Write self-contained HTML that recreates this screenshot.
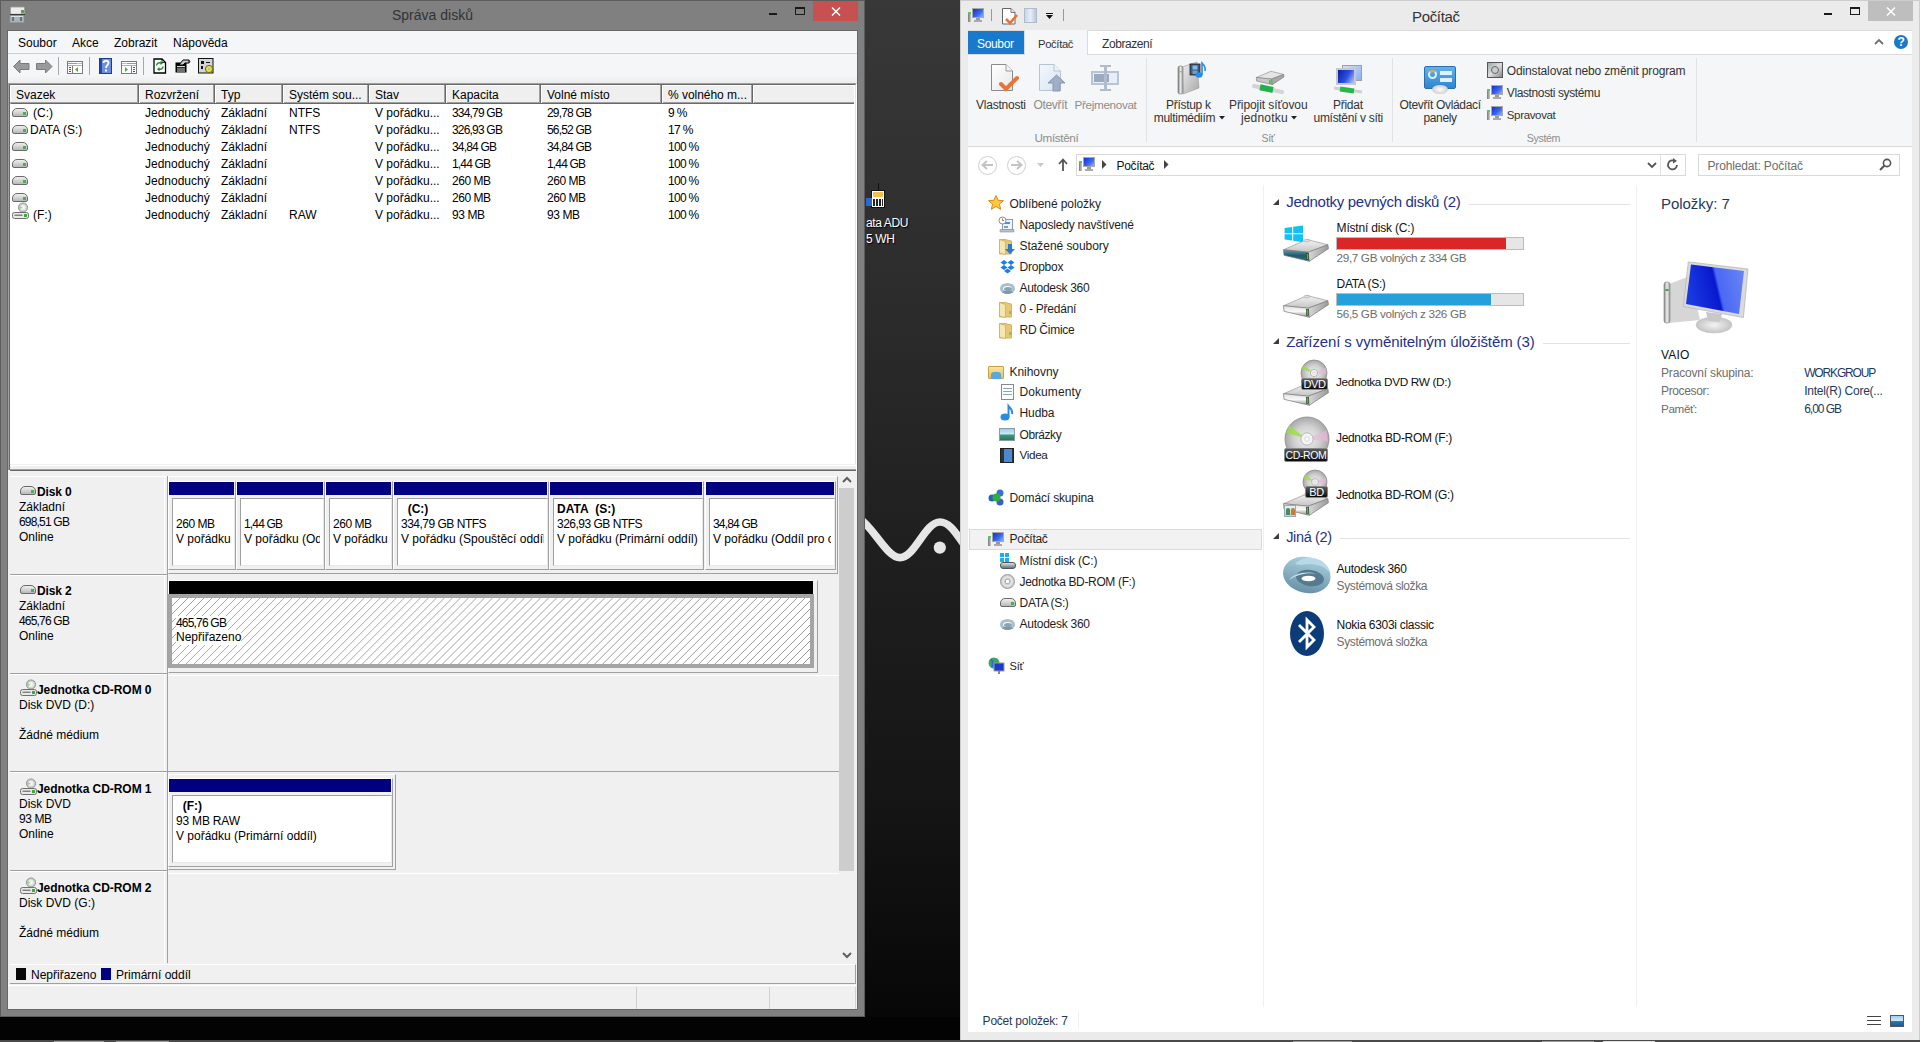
<!DOCTYPE html>
<html><head><meta charset="utf-8"><style>
*{box-sizing:border-box}
html,body{margin:0;padding:0}
body{width:1924px;height:1042px;overflow:hidden;position:relative;background:#050505;font-family:"Liberation Sans",sans-serif;font-size:12px;color:#000}
.a{position:absolute}
.t{position:absolute;white-space:nowrap;line-height:14px}
.b{font-weight:bold}
svg{position:absolute;overflow:visible}
</style></head><body>
<div class="a" style="left:865px;top:0px;width:95px;height:1017px;background:linear-gradient(#383838 0,#2c2c2c 300px,#1f1f1f 550px,#151515 800px,#070707 1017px)"></div>
<div class="a" style="left:0px;top:1017px;width:960px;height:23px;background:#030303"></div>
<div class="a" style="left:0px;top:1040px;width:1924px;height:2px;background:#4a4a4a"></div>
<div class="a" style="left:54px;top:1041px;width:50px;height:1px;background:#9a9a9a"></div>
<div class="a" style="left:116px;top:1041px;width:53px;height:1px;background:#9a9a9a"></div>
<div class="a" style="left:1293px;top:1041px;width:59px;height:1px;background:#9a9a9a"></div>
<div class="a" style="left:1542px;top:1041px;width:52px;height:1px;background:#9a9a9a"></div>
<div class="a" style="left:1603px;top:1041px;width:52px;height:1px;background:#e0e0e0"></div>
<div class="a" style="left:871px;top:190px;width:14px;height:18px;background:#fff;border:1.5px solid #111"></div>
<div class="a" style="left:873px;top:192px;width:10px;height:5px;background:#f0c050"></div>
<div class="a" style="left:873px;top:199px;width:10px;height:7px;background:repeating-linear-gradient(90deg,#222 0 2px,#fff 2px 3px)"></div>
<div class="a" style="left:866px;top:198px;width:6px;height:8px;background:#2a6ad0"></div>
<div class="a" style="left:878px;top:183px;width:1px;height:7px;background:#111"></div>
<div class="t" style="left:866px;top:216.0px;line-height:14px;color:#fff;text-shadow:1px 1px 1px #000;letter-spacing:-0.392px;">ata ADU</div>
<div class="t" style="left:866px;top:231.5px;line-height:14px;color:#fff;text-shadow:1px 1px 1px #000;letter-spacing:-0.333px;">5 WH</div>
<svg style="left:865px;top:505px" width="95" height="70" viewBox="0 0 95 70">
<path d="M-5 14 C 8 22, 22 52.6, 35 52.6 C 50 52.6, 60 17, 75 17 C 85 17, 92 30, 98 38" fill="none" stroke="#e6e6e6" stroke-width="7.7"/>
<circle cx="74.8" cy="42.6" r="6.1" fill="#e6e6e6"/></svg>
<div class="a" style="left:0px;top:0px;width:865px;height:1017px;background:#808080;border:1px solid #5c5c5c"></div>
<svg style="left:9px;top:6px" width="18" height="18" viewBox="0 0 18 18">
<rect x="1.5" y="1" width="14" height="7.5" rx="1" fill="#ececec" stroke="#9a9a9a" stroke-width=".8"/>
<rect x="12" y="4" width="3" height="3.5" fill="#6a9a3a"/>
<path d="M1 8.5 L16 8.5" stroke="#3a3a3a" stroke-width="1.2"/>
<rect x="1" y="9.5" width="14" height="7" fill="#a8b4bc" stroke="#8a949c" stroke-width=".6"/>
<path d="M4 11 L4 15 M12 11 L12 15" stroke="#3c4850" stroke-width="1.2"/>
<path d="M2 10.5 L14 10.5" stroke="#dde4e8" stroke-width="1"/>
</svg>
<div class="t" style="left:392px;top:6px;font-size:14px;line-height:18px;color:#333">Správa disků</div>
<div class="a" style="left:769px;top:13px;width:8px;height:2px;background:#1a1a1a"></div>
<div class="a" style="left:795px;top:7px;width:10px;height:8px;border:1px solid #1a1a1a;border-top-width:2px"></div>
<div class="a" style="left:813px;top:1px;width:45px;height:20px;background:#c75050"></div>
<svg style="left:831px;top:7px" width="10" height="9"><path d="M1 0.5 L9 8.5 M9 0.5 L1 8.5" stroke="#fff" stroke-width="1.5"/></svg>
<div class="a" style="left:7px;top:30px;width:851px;height:980px;background:#f0f0f0;border:1px solid #686868"></div>
<div class="a" style="left:8px;top:31px;width:849px;height:23px;background:#f5f6f7;border-bottom:1px solid #cfcfcf"></div>
<div class="t" style="left:18px;top:35.5px;line-height:14px;;">Soubor</div>
<div class="t" style="left:72px;top:35.5px;line-height:14px;;">Akce</div>
<div class="t" style="left:114px;top:35.5px;line-height:14px;;">Zobrazit</div>
<div class="t" style="left:173px;top:35.5px;line-height:14px;;">Nápověda</div>
<div class="a" style="left:8px;top:54px;width:849px;height:29px;background:linear-gradient(#f5f6f7 0,#f5f6f7 72%,#ececec 100%)"></div>
<svg style="left:13px;top:59px" width="17" height="15"><path d="M0.5 7.5 L7 1 L7 4.5 L16 4.5 L16 10.5 L7 10.5 L7 14 Z" fill="#9a9a9a" stroke="#7a7a7a"/></svg>
<svg style="left:36px;top:59px" width="17" height="15"><path d="M16 7.5 L9.5 1 L9.5 4.5 L0.5 4.5 L0.5 10.5 L9.5 10.5 L9.5 14 Z" fill="#9a9a9a" stroke="#7a7a7a"/></svg>
<div class="a" style="left:58px;top:57px;width:1px;height:18px;background:#a8a8a8"></div>
<div class="a" style="left:89px;top:57px;width:1px;height:18px;background:#a8a8a8"></div>
<div class="a" style="left:143px;top:57px;width:1px;height:18px;background:#a8a8a8"></div>
<svg style="left:67px;top:61px" width="16" height="13" viewBox="0 0 16 13"><g >
<rect x="0.5" y="0.5" width="15" height="12" fill="#fff" stroke="#7a7a7a"/>
<path d="M1 2.5 H10.5" stroke="#9a9a9a"/><rect x="11.5" y="2" width="1" height="1" fill="#777"/><rect x="13.5" y="2" width="1" height="1" fill="#777"/>
<path d="M1 4.5 H15" stroke="#b0b0b0"/>
<path d="M5.5 5 V12" stroke="#7a7a7a"/>
<rect x="2" y="6" width="2" height="1" fill="#555"/><rect x="2" y="8" width="2" height="1" fill="#555"/><rect x="2" y="10" width="2" height="1" fill="#555"/>
</g><path d="M8 8.5 L11 6 L11 11 Z" fill="#4caf3a"/></svg>
<svg style="left:99px;top:58px" width="13" height="16" viewBox="0 0 13 16"><rect x="0" y="0" width="13" height="16" fill="#6b8ee0"/><rect x="0" y="0" width="3" height="16" fill="#2a47a8"/><rect x="0.5" y="0.5" width="12" height="15" fill="none" stroke="#1f3a98"/>
<path d="M4.5 5 C 4.5 2, 9.5 2, 9.5 5 C 9.5 7, 7 7.5, 7 10" stroke="#fff" stroke-width="1.8" fill="none"/><rect x="6" y="11.5" width="2" height="2" fill="#fff"/></svg>
<svg style="left:121px;top:61px" width="16" height="13" viewBox="0 0 16 13"><g transform="translate(16,0) scale(-1,1)">
<rect x="0.5" y="0.5" width="15" height="12" fill="#fff" stroke="#7a7a7a"/>
<path d="M1 2.5 H10.5" stroke="#9a9a9a"/><rect x="11.5" y="2" width="1" height="1" fill="#777"/><rect x="13.5" y="2" width="1" height="1" fill="#777"/>
<path d="M1 4.5 H15" stroke="#b0b0b0"/>
<path d="M5.5 5 V12" stroke="#7a7a7a"/>
<rect x="2" y="6" width="2" height="1" fill="#555"/><rect x="2" y="8" width="2" height="1" fill="#555"/><rect x="2" y="10" width="2" height="1" fill="#555"/>
</g><path d="M7 8.5 L4 6 L4 11 Z" fill="#4caf3a"/></svg>
<svg style="left:153px;top:58px" width="14" height="16" viewBox="0 0 14 16">
<path d="M1 1 H9 L12.5 4.5 V15 H1 Z" fill="#fff" stroke="#000" stroke-width="1.3"/>
<path d="M9 1 V4.5 H12.5" fill="none" stroke="#000" stroke-width=".8"/>
<path d="M3.5 7.5 C 3.5 5, 6 4.5, 8 5" stroke="#1a8a2a" stroke-width="1.4" fill="none"/><path d="M7.5 3 L10 5.2 L7.5 7Z" fill="#1a8a2a"/>
<path d="M10 8.5 C 10 11, 8 11.5, 6 11.2" stroke="#1a8a2a" stroke-width="1.4" fill="none"/><path d="M6.5 9 L4 11.2 L6.5 13.2Z" fill="#1a8a2a"/>
</svg>
<svg style="left:175px;top:59px" width="16" height="14" viewBox="0 0 16 14">
<rect x="0.5" y="3.5" width="11" height="10" fill="#000"/>
<rect x="2" y="7" width="8" height="1.2" fill="#ddd"/><rect x="2" y="9.5" width="8" height="1" fill="#ddd"/><rect x="2" y="11.5" width="8" height="1" fill="#ddd"/>
<path d="M4 6 L8 1 H14 V4 H10 L8 6Z" fill="#c8c8c8" stroke="#000" stroke-width="1"/>
<path d="M14 0.5 L15.5 2.5 L14 4.5Z" fill="#2a2aa0"/>
</svg>
<svg style="left:198px;top:58px" width="17" height="16" viewBox="0 0 17 16">
<rect x="0.5" y="0.5" width="14.5" height="14.5" fill="#d4d4d4" stroke="#111" stroke-width="1"/>
<rect x="3" y="3" width="3" height="3" fill="#111"/><rect x="8" y="4" width="4" height="1" fill="#111"/><rect x="3" y="8" width="2" height="3" fill="#111"/>
<circle cx="11" cy="11" r="3.6" fill="#e8e040" stroke="#6a6a10" stroke-width="1"/><circle cx="11" cy="11" r="1.2" fill="#bbb"/>
</svg>
<div class="a" style="left:8px;top:83px;width:849px;height:387px;background:#fff;border-top:1px solid #a0a0a0;border-left:1px solid #a0a0a0;border-right:1px solid #fff"></div>
<div class="a" style="left:9px;top:84px;width:847px;height:386px;border-top:1px solid #696969;border-left:1px solid #696969;border-right:1px solid #e3e3e3"></div>
<div class="a" style="left:10px;top:85px;width:844px;height:19px;background:#efefef;border-top:1px solid #fff;border-left:1px solid #fff;border-bottom:1px solid #696969"></div>
<div class="a" style="left:10px;top:102px;width:844px;height:1px;background:#a0a0a0"></div>
<div class="t" style="left:16px;top:88.0px;line-height:14px;;">Svazek</div>
<div class="a" style="left:137px;top:85px;width:3px;height:18px;background:linear-gradient(90deg,#a0a0a0 33.3%,#696969 33.3%,#696969 66.6%,#fff 66.6%)"></div>
<div class="t" style="left:145px;top:88.0px;line-height:14px;;">Rozvržení</div>
<div class="a" style="left:213px;top:85px;width:3px;height:18px;background:linear-gradient(90deg,#a0a0a0 33.3%,#696969 33.3%,#696969 66.6%,#fff 66.6%)"></div>
<div class="t" style="left:221px;top:88.0px;line-height:14px;;">Typ</div>
<div class="a" style="left:281px;top:85px;width:3px;height:18px;background:linear-gradient(90deg,#a0a0a0 33.3%,#696969 33.3%,#696969 66.6%,#fff 66.6%)"></div>
<div class="t" style="left:289px;top:88.0px;line-height:14px;;">Systém sou...</div>
<div class="a" style="left:367px;top:85px;width:3px;height:18px;background:linear-gradient(90deg,#a0a0a0 33.3%,#696969 33.3%,#696969 66.6%,#fff 66.6%)"></div>
<div class="t" style="left:375px;top:88.0px;line-height:14px;;">Stav</div>
<div class="a" style="left:444px;top:85px;width:3px;height:18px;background:linear-gradient(90deg,#a0a0a0 33.3%,#696969 33.3%,#696969 66.6%,#fff 66.6%)"></div>
<div class="t" style="left:452px;top:88.0px;line-height:14px;;">Kapacita</div>
<div class="a" style="left:539px;top:85px;width:3px;height:18px;background:linear-gradient(90deg,#a0a0a0 33.3%,#696969 33.3%,#696969 66.6%,#fff 66.6%)"></div>
<div class="t" style="left:547px;top:88.0px;line-height:14px;;">Volné místo</div>
<div class="a" style="left:660px;top:85px;width:3px;height:18px;background:linear-gradient(90deg,#a0a0a0 33.3%,#696969 33.3%,#696969 66.6%,#fff 66.6%)"></div>
<div class="t" style="left:668px;top:88.0px;line-height:14px;;letter-spacing:-0.031px;">% volného m...</div>
<div class="a" style="left:751px;top:85px;width:3px;height:18px;background:linear-gradient(90deg,#a0a0a0 33.3%,#696969 33.3%,#696969 66.6%,#fff 66.6%)"></div>
<div class="a" style="left:12px;top:108px;width:16px;height:9px;border-radius:5px 5px 2px 2px;background:linear-gradient(#f0f0f0,#b8b8b8);border:1px solid #6a6a6a"></div>
<div class="a" style="left:23px;top:112px;width:3px;height:3px;background:#3db83d"></div>
<div class="t" style="left:33px;top:105.5px;line-height:14px;;">(C:)</div>
<div class="t" style="left:145px;top:105.5px;line-height:14px;;">Jednoduchý</div>
<div class="t" style="left:221px;top:105.5px;line-height:14px;;">Základní</div>
<div class="t" style="left:289px;top:105.5px;line-height:14px;;">NTFS</div>
<div class="t" style="left:375px;top:105.5px;line-height:14px;;">V pořádku...</div>
<div class="t" style="left:452px;top:105.5px;line-height:14px;;letter-spacing:-0.812px;">334,79 GB</div>
<div class="t" style="left:547px;top:105.5px;line-height:14px;;letter-spacing:-0.814px;">29,78 GB</div>
<div class="t" style="left:668px;top:105.5px;line-height:14px;;letter-spacing:-0.600px;">9 %</div>
<div class="a" style="left:12px;top:125px;width:16px;height:9px;border-radius:5px 5px 2px 2px;background:linear-gradient(#f0f0f0,#b8b8b8);border:1px solid #6a6a6a"></div>
<div class="a" style="left:23px;top:129px;width:3px;height:3px;background:#3db83d"></div>
<div class="t" style="left:30px;top:122.5px;line-height:14px;;">DATA (S:)</div>
<div class="t" style="left:145px;top:122.5px;line-height:14px;;">Jednoduchý</div>
<div class="t" style="left:221px;top:122.5px;line-height:14px;;">Základní</div>
<div class="t" style="left:289px;top:122.5px;line-height:14px;;">NTFS</div>
<div class="t" style="left:375px;top:122.5px;line-height:14px;;">V pořádku...</div>
<div class="t" style="left:452px;top:122.5px;line-height:14px;;letter-spacing:-0.812px;">326,93 GB</div>
<div class="t" style="left:547px;top:122.5px;line-height:14px;;letter-spacing:-0.814px;">56,52 GB</div>
<div class="t" style="left:668px;top:122.5px;line-height:14px;;letter-spacing:-0.667px;">17 %</div>
<div class="a" style="left:12px;top:142px;width:16px;height:9px;border-radius:5px 5px 2px 2px;background:linear-gradient(#f0f0f0,#b8b8b8);border:1px solid #6a6a6a"></div>
<div class="a" style="left:23px;top:146px;width:3px;height:3px;background:#3db83d"></div>
<div class="t" style="left:145px;top:139.5px;line-height:14px;;">Jednoduchý</div>
<div class="t" style="left:221px;top:139.5px;line-height:14px;;">Základní</div>
<div class="t" style="left:375px;top:139.5px;line-height:14px;;">V pořádku...</div>
<div class="t" style="left:452px;top:139.5px;line-height:14px;;letter-spacing:-0.814px;">34,84 GB</div>
<div class="t" style="left:547px;top:139.5px;line-height:14px;;letter-spacing:-0.814px;">34,84 GB</div>
<div class="t" style="left:668px;top:139.5px;line-height:14px;;letter-spacing:-0.700px;">100 %</div>
<div class="a" style="left:12px;top:159px;width:16px;height:9px;border-radius:5px 5px 2px 2px;background:linear-gradient(#f0f0f0,#b8b8b8);border:1px solid #6a6a6a"></div>
<div class="a" style="left:23px;top:163px;width:3px;height:3px;background:#3db83d"></div>
<div class="t" style="left:145px;top:156.5px;line-height:14px;;">Jednoduchý</div>
<div class="t" style="left:221px;top:156.5px;line-height:14px;;">Základní</div>
<div class="t" style="left:375px;top:156.5px;line-height:14px;;">V pořádku...</div>
<div class="t" style="left:452px;top:156.5px;line-height:14px;;letter-spacing:-0.817px;">1,44 GB</div>
<div class="t" style="left:547px;top:156.5px;line-height:14px;;letter-spacing:-0.817px;">1,44 GB</div>
<div class="t" style="left:668px;top:156.5px;line-height:14px;;letter-spacing:-0.700px;">100 %</div>
<div class="a" style="left:12px;top:176px;width:16px;height:9px;border-radius:5px 5px 2px 2px;background:linear-gradient(#f0f0f0,#b8b8b8);border:1px solid #6a6a6a"></div>
<div class="a" style="left:23px;top:180px;width:3px;height:3px;background:#3db83d"></div>
<div class="t" style="left:145px;top:173.5px;line-height:14px;;">Jednoduchý</div>
<div class="t" style="left:221px;top:173.5px;line-height:14px;;">Základní</div>
<div class="t" style="left:375px;top:173.5px;line-height:14px;;">V pořádku...</div>
<div class="t" style="left:452px;top:173.5px;line-height:14px;;letter-spacing:-0.480px;">260 MB</div>
<div class="t" style="left:547px;top:173.5px;line-height:14px;;letter-spacing:-0.480px;">260 MB</div>
<div class="t" style="left:668px;top:173.5px;line-height:14px;;letter-spacing:-0.700px;">100 %</div>
<div class="a" style="left:12px;top:193px;width:16px;height:9px;border-radius:5px 5px 2px 2px;background:linear-gradient(#f0f0f0,#b8b8b8);border:1px solid #6a6a6a"></div>
<div class="a" style="left:23px;top:197px;width:3px;height:3px;background:#3db83d"></div>
<div class="t" style="left:145px;top:190.5px;line-height:14px;;">Jednoduchý</div>
<div class="t" style="left:221px;top:190.5px;line-height:14px;;">Základní</div>
<div class="t" style="left:375px;top:190.5px;line-height:14px;;">V pořádku...</div>
<div class="t" style="left:452px;top:190.5px;line-height:14px;;letter-spacing:-0.480px;">260 MB</div>
<div class="t" style="left:547px;top:190.5px;line-height:14px;;letter-spacing:-0.480px;">260 MB</div>
<div class="t" style="left:668px;top:190.5px;line-height:14px;;letter-spacing:-0.700px;">100 %</div>
<svg style="left:12px;top:202px" width="17" height="18" viewBox="0 0 17 18">
<defs><radialGradient id="cdg"><stop offset="0" stop-color="#fff"/><stop offset=".5" stop-color="#e4ece4"/><stop offset="1" stop-color="#b8b8b8"/></radialGradient></defs>
<circle cx="11" cy="5.5" r="4.6" fill="url(#cdg)" stroke="#8a8a8a" stroke-width=".8"/>
<path d="M7 4 L11 5.5 L7.5 7Z" fill="#8cd070" opacity=".8"/>
<rect x="0.5" y="10.5" width="16" height="6" rx="2" fill="#e8e8e8" stroke="#707070"/>
<rect x="2.5" y="12.6" width="8" height="1.3" fill="#777"/>
<rect x="12" y="12" width="3" height="3" fill="#3aa83a"/>
</svg>
<div class="t" style="left:33px;top:207.5px;line-height:14px;;">(F:)</div>
<div class="t" style="left:145px;top:207.5px;line-height:14px;;">Jednoduchý</div>
<div class="t" style="left:221px;top:207.5px;line-height:14px;;">Základní</div>
<div class="t" style="left:289px;top:207.5px;line-height:14px;;">RAW</div>
<div class="t" style="left:375px;top:207.5px;line-height:14px;;">V pořádku...</div>
<div class="t" style="left:452px;top:207.5px;line-height:14px;;letter-spacing:-0.400px;">93 MB</div>
<div class="t" style="left:547px;top:207.5px;line-height:14px;;letter-spacing:-0.400px;">93 MB</div>
<div class="t" style="left:668px;top:207.5px;line-height:14px;;letter-spacing:-0.700px;">100 %</div>
<div class="a" style="left:10px;top:464px;width:846px;height:7px;background:#f0f0f0"></div>
<div class="a" style="left:10px;top:465px;width:846px;height:1px;background:#fff"></div>
<div class="a" style="left:10px;top:469px;width:846px;height:1px;background:#a0a0a0"></div>
<div class="a" style="left:10px;top:470px;width:846px;height:1px;background:#696969"></div>
<div class="a" style="left:10px;top:471px;width:829px;height:493px;background:#f0f0f0"></div>
<div class="a" style="left:839px;top:472px;width:16px;height:492px;background:#f0f0f0"></div>
<div class="a" style="left:839px;top:488px;width:15px;height:383px;background:#cdcdcd"></div>
<svg style="left:842px;top:476px" width="10" height="7"><path d="M1 6 L5 2 L9 6" stroke="#606060" stroke-width="2" fill="none"/></svg>
<svg style="left:842px;top:952px" width="10" height="7"><path d="M1 1 L5 5 L9 1" stroke="#606060" stroke-width="2" fill="none"/></svg>
<div class="a" style="left:10px;top:476px;width:157px;height:98px;background:#f0f0f0;border-top:1px solid #fff"></div>
<div class="a" style="left:164px;top:476px;width:1px;height:98px;background:#fff"></div>
<div class="a" style="left:167px;top:476px;width:1px;height:98px;background:#a0a0a0"></div>
<div class="a" style="left:10px;top:574px;width:158px;height:1px;background:#a0a0a0"></div>
<div class="a" style="left:10px;top:575px;width:158px;height:1px;background:#fff"></div>
<div class="a" style="left:20px;top:486px;width:16px;height:9px;border-radius:5px 5px 2px 2px;background:linear-gradient(#f0f0f0,#b8b8b8);border:1px solid #6a6a6a"></div>
<div class="a" style="left:31px;top:490px;width:3px;height:3px;background:#3db83d"></div>
<div class="t" style="left:37px;top:484.5px;line-height:14px;font-weight:bold;letter-spacing:-0.160px;">Disk 0</div>
<div class="t" style="left:19px;top:499.5px;line-height:14px;;">Základní</div>
<div class="t" style="left:19px;top:514.5px;line-height:14px;;letter-spacing:-0.812px;">698,51 GB</div>
<div class="t" style="left:19px;top:529.5px;line-height:14px;;">Online</div>
<div class="a" style="left:168px;top:476px;width:670px;height:98px;border-right:1px solid #a0a0a0;border-bottom:1px solid #a0a0a0;border-top:1px solid #fff;border-left:1px solid #fff"></div>
<div class="a" style="left:168px;top:481px;width:68px;height:89px;background:#f0f0f0;border-right:1px solid #a0a0a0;border-bottom:1px solid #a0a0a0;border-top:1px solid #fff;border-left:1px solid #fff"></div>
<div class="a" style="left:169px;top:482px;width:65px;height:13px;background:#000080"></div>
<div class="a" style="left:172px;top:498px;width:63px;height:68px;background:#fff;border-left:1px solid #a0a0a0;border-top:1px solid #a0a0a0;border-right:1px solid #e8e8e8;border-bottom:1px solid #e8e8e8"></div>
<div class="a" style="left:173px;top:499px;width:58px;height:66px;overflow:hidden"><div class="t" style="left:3px;top:18px;;letter-spacing:-0.480px;">260 MB</div><div class="t" style="left:3px;top:33px;;">V pořádku (Oddíl pro obnovení)</div></div>
<div class="a" style="left:236px;top:481px;width:89px;height:89px;background:#f0f0f0;border-right:1px solid #a0a0a0;border-bottom:1px solid #a0a0a0;border-top:1px solid #fff;border-left:1px solid #fff"></div>
<div class="a" style="left:237px;top:482px;width:86px;height:13px;background:#000080"></div>
<div class="a" style="left:240px;top:498px;width:84px;height:68px;background:#fff;border-left:1px solid #a0a0a0;border-top:1px solid #a0a0a0;border-right:1px solid #e8e8e8;border-bottom:1px solid #e8e8e8"></div>
<div class="a" style="left:241px;top:499px;width:79px;height:66px;overflow:hidden"><div class="t" style="left:3px;top:18px;;letter-spacing:-0.817px;">1,44 GB</div><div class="t" style="left:3px;top:33px;;">V pořádku (Oddíl pro obnovení)</div></div>
<div class="a" style="left:325px;top:481px;width:68px;height:89px;background:#f0f0f0;border-right:1px solid #a0a0a0;border-bottom:1px solid #a0a0a0;border-top:1px solid #fff;border-left:1px solid #fff"></div>
<div class="a" style="left:326px;top:482px;width:65px;height:13px;background:#000080"></div>
<div class="a" style="left:329px;top:498px;width:63px;height:68px;background:#fff;border-left:1px solid #a0a0a0;border-top:1px solid #a0a0a0;border-right:1px solid #e8e8e8;border-bottom:1px solid #e8e8e8"></div>
<div class="a" style="left:330px;top:499px;width:58px;height:66px;overflow:hidden"><div class="t" style="left:3px;top:18px;;letter-spacing:-0.480px;">260 MB</div><div class="t" style="left:3px;top:33px;;">V pořádku (Systémový oddíl EFI)</div></div>
<div class="a" style="left:393px;top:481px;width:156px;height:89px;background:#f0f0f0;border-right:1px solid #a0a0a0;border-bottom:1px solid #a0a0a0;border-top:1px solid #fff;border-left:1px solid #fff"></div>
<div class="a" style="left:394px;top:482px;width:153px;height:13px;background:#000080"></div>
<div class="a" style="left:397px;top:498px;width:151px;height:68px;background:#fff;border-left:1px solid #a0a0a0;border-top:1px solid #a0a0a0;border-right:1px solid #e8e8e8;border-bottom:1px solid #e8e8e8"></div>
<div class="a" style="left:398px;top:499px;width:146px;height:66px;overflow:hidden"><div class="t" style="left:3px;top:3px;font-weight:bold;">&nbsp;&nbsp;(C:)</div><div class="t" style="left:3px;top:18px;;letter-spacing:-0.500px;">334,79 GB NTFS</div><div class="t" style="left:3px;top:33px;;">V pořádku (Spouštěcí oddíl, Stránkovací soubor)</div></div>
<div class="a" style="left:549px;top:481px;width:155px;height:89px;background:#f0f0f0;border-right:1px solid #a0a0a0;border-bottom:1px solid #a0a0a0;border-top:1px solid #fff;border-left:1px solid #fff"></div>
<div class="a" style="left:550px;top:482px;width:152px;height:13px;background:#000080"></div>
<div class="a" style="left:553px;top:498px;width:150px;height:68px;background:#fff;border-left:1px solid #a0a0a0;border-top:1px solid #a0a0a0;border-right:1px solid #e8e8e8;border-bottom:1px solid #e8e8e8"></div>
<div class="a" style="left:554px;top:499px;width:145px;height:66px;overflow:hidden"><div class="t" style="left:3px;top:3px;font-weight:bold;">DATA&nbsp; (S:)</div><div class="t" style="left:3px;top:18px;;letter-spacing:-0.500px;">326,93 GB NTFS</div><div class="t" style="left:3px;top:33px;;">V pořádku (Primární oddíl)</div></div>
<div class="a" style="left:705px;top:481px;width:131px;height:89px;background:#f0f0f0;border-right:1px solid #a0a0a0;border-bottom:1px solid #a0a0a0;border-top:1px solid #fff;border-left:1px solid #fff"></div>
<div class="a" style="left:706px;top:482px;width:128px;height:13px;background:#000080"></div>
<div class="a" style="left:709px;top:498px;width:126px;height:68px;background:#fff;border-left:1px solid #a0a0a0;border-top:1px solid #a0a0a0;border-right:1px solid #e8e8e8;border-bottom:1px solid #e8e8e8"></div>
<div class="a" style="left:710px;top:499px;width:121px;height:66px;overflow:hidden"><div class="t" style="left:3px;top:18px;;letter-spacing:-0.814px;">34,84 GB</div><div class="t" style="left:3px;top:33px;;">V pořádku (Oddíl pro obnovení)</div></div>
<div class="a" style="left:10px;top:575px;width:157px;height:98px;background:#f0f0f0;border-top:1px solid #fff"></div>
<div class="a" style="left:164px;top:575px;width:1px;height:98px;background:#fff"></div>
<div class="a" style="left:167px;top:575px;width:1px;height:98px;background:#a0a0a0"></div>
<div class="a" style="left:10px;top:673px;width:158px;height:1px;background:#a0a0a0"></div>
<div class="a" style="left:10px;top:674px;width:158px;height:1px;background:#fff"></div>
<div class="a" style="left:20px;top:585px;width:16px;height:9px;border-radius:5px 5px 2px 2px;background:linear-gradient(#f0f0f0,#b8b8b8);border:1px solid #6a6a6a"></div>
<div class="a" style="left:31px;top:589px;width:3px;height:3px;background:#3db83d"></div>
<div class="t" style="left:37px;top:583.5px;line-height:14px;font-weight:bold;letter-spacing:-0.160px;">Disk 2</div>
<div class="t" style="left:19px;top:598.5px;line-height:14px;;">Základní</div>
<div class="t" style="left:19px;top:613.5px;line-height:14px;;letter-spacing:-0.812px;">465,76 GB</div>
<div class="t" style="left:19px;top:628.5px;line-height:14px;;">Online</div>
<div class="a" style="left:168px;top:580px;width:650px;height:93px;background:#f0f0f0;border-right:1px solid #a0a0a0;border-bottom:1px solid #a0a0a0;border-top:1px solid #fff;border-left:1px solid #fff"></div>
<div class="a" style="left:169px;top:581px;width:644px;height:13px;background:#000"></div>
<div class="a" style="left:168px;top:594px;width:646px;height:74px;border:4px solid #a4a4a4;background:repeating-linear-gradient(-45deg,#fff 0,#fff 4.7px,#858585 5.0px,#858585 5.3px,#fff 5.66px)"></div>
<div class="t" style="left:176px;top:615.5px;line-height:15px;background:#fff;letter-spacing:-0.812px;">465,76 GB</div>
<div class="t" style="left:176px;top:630.3px;line-height:15px;background:#fff;">Nepřiřazeno</div>
<div class="a" style="left:10px;top:674px;width:157px;height:97px;background:#f0f0f0;border-top:1px solid #fff"></div>
<div class="a" style="left:164px;top:674px;width:1px;height:97px;background:#fff"></div>
<div class="a" style="left:167px;top:674px;width:1px;height:97px;background:#a0a0a0"></div>
<div class="a" style="left:10px;top:771px;width:158px;height:1px;background:#a0a0a0"></div>
<div class="a" style="left:10px;top:772px;width:158px;height:1px;background:#fff"></div>
<svg style="left:20px;top:679px" width="17" height="18" viewBox="0 0 17 18">
<defs><radialGradient id="cdg"><stop offset="0" stop-color="#fff"/><stop offset=".5" stop-color="#e4ece4"/><stop offset="1" stop-color="#b8b8b8"/></radialGradient></defs>
<circle cx="11" cy="5.5" r="4.6" fill="url(#cdg)" stroke="#8a8a8a" stroke-width=".8"/>
<path d="M7 4 L11 5.5 L7.5 7Z" fill="#8cd070" opacity=".8"/>
<rect x="0.5" y="10.5" width="16" height="6" rx="2" fill="#e8e8e8" stroke="#707070"/>
<rect x="2.5" y="12.6" width="8" height="1.3" fill="#777"/>
<rect x="12" y="12" width="3" height="3" fill="#3aa83a"/>
</svg>
<div class="t" style="left:37px;top:682.5px;line-height:14px;font-weight:bold;letter-spacing:-0.050px;">Jednotka CD-ROM 0</div>
<div class="t" style="left:19px;top:697.5px;line-height:14px;;">Disk DVD (D:)</div>
<div class="t" style="left:19px;top:727.5px;line-height:14px;;">Žádné médium</div>
<div class="a" style="left:168px;top:675px;width:671px;height:97px;border-top:1px solid #fff;border-bottom:1px solid #a0a0a0"></div>
<div class="a" style="left:10px;top:772px;width:157px;height:98px;background:#f0f0f0;border-top:1px solid #fff"></div>
<div class="a" style="left:164px;top:772px;width:1px;height:98px;background:#fff"></div>
<div class="a" style="left:167px;top:772px;width:1px;height:98px;background:#a0a0a0"></div>
<div class="a" style="left:10px;top:870px;width:158px;height:1px;background:#a0a0a0"></div>
<div class="a" style="left:10px;top:871px;width:158px;height:1px;background:#fff"></div>
<svg style="left:20px;top:778px" width="17" height="18" viewBox="0 0 17 18">
<defs><radialGradient id="cdg"><stop offset="0" stop-color="#fff"/><stop offset=".5" stop-color="#e4ece4"/><stop offset="1" stop-color="#b8b8b8"/></radialGradient></defs>
<circle cx="11" cy="5.5" r="4.6" fill="url(#cdg)" stroke="#8a8a8a" stroke-width=".8"/>
<path d="M7 4 L11 5.5 L7.5 7Z" fill="#8cd070" opacity=".8"/>
<rect x="0.5" y="10.5" width="16" height="6" rx="2" fill="#e8e8e8" stroke="#707070"/>
<rect x="2.5" y="12.6" width="8" height="1.3" fill="#777"/>
<rect x="12" y="12" width="3" height="3" fill="#3aa83a"/>
</svg>
<div class="t" style="left:37px;top:781.5px;line-height:14px;font-weight:bold;letter-spacing:-0.050px;">Jednotka CD-ROM 1</div>
<div class="t" style="left:19px;top:796.5px;line-height:14px;;">Disk DVD</div>
<div class="t" style="left:19px;top:811.5px;line-height:14px;;letter-spacing:-0.400px;">93 MB</div>
<div class="t" style="left:19px;top:826.5px;line-height:14px;;">Online</div>
<div class="a" style="left:168px;top:774px;width:228px;height:96px;border-right:1px solid #a0a0a0;border-bottom:1px solid #a0a0a0;border-top:1px solid #fff;border-left:1px solid #fff"></div>
<div class="a" style="left:168px;top:778px;width:225px;height:89px;background:#f0f0f0;border-right:1px solid #a0a0a0;border-bottom:1px solid #a0a0a0;border-top:1px solid #fff;border-left:1px solid #fff"></div>
<div class="a" style="left:169px;top:779px;width:222px;height:13px;background:#000080"></div>
<div class="a" style="left:172px;top:795px;width:220px;height:68px;background:#fff;border-left:1px solid #a0a0a0;border-top:1px solid #a0a0a0;border-right:1px solid #e8e8e8;border-bottom:1px solid #e8e8e8"></div>
<div class="a" style="left:173px;top:796px;width:215px;height:66px;overflow:hidden"><div class="t" style="left:3px;top:3px;font-weight:bold;">&nbsp;&nbsp;(F:)</div><div class="t" style="left:3px;top:18px;;letter-spacing:-0.200px;">93 MB RAW</div><div class="t" style="left:3px;top:33px;;">V pořádku (Primární oddíl)</div></div>
<div class="a" style="left:10px;top:871px;width:157px;height:93px;background:#f0f0f0;border-top:1px solid #fff"></div>
<div class="a" style="left:164px;top:871px;width:1px;height:93px;background:#fff"></div>
<div class="a" style="left:167px;top:871px;width:1px;height:93px;background:#a0a0a0"></div>
<div class="a" style="left:10px;top:964px;width:158px;height:1px;background:#a0a0a0"></div>
<div class="a" style="left:10px;top:965px;width:158px;height:1px;background:#fff"></div>
<svg style="left:20px;top:877px" width="17" height="18" viewBox="0 0 17 18">
<defs><radialGradient id="cdg"><stop offset="0" stop-color="#fff"/><stop offset=".5" stop-color="#e4ece4"/><stop offset="1" stop-color="#b8b8b8"/></radialGradient></defs>
<circle cx="11" cy="5.5" r="4.6" fill="url(#cdg)" stroke="#8a8a8a" stroke-width=".8"/>
<path d="M7 4 L11 5.5 L7.5 7Z" fill="#8cd070" opacity=".8"/>
<rect x="0.5" y="10.5" width="16" height="6" rx="2" fill="#e8e8e8" stroke="#707070"/>
<rect x="2.5" y="12.6" width="8" height="1.3" fill="#777"/>
<rect x="12" y="12" width="3" height="3" fill="#3aa83a"/>
</svg>
<div class="t" style="left:37px;top:880.5px;line-height:14px;font-weight:bold;letter-spacing:-0.050px;">Jednotka CD-ROM 2</div>
<div class="t" style="left:19px;top:895.5px;line-height:14px;;">Disk DVD (G:)</div>
<div class="t" style="left:19px;top:925.5px;line-height:14px;;">Žádné médium</div>
<div class="a" style="left:168px;top:873px;width:671px;height:91px;border-top:1px solid #fff"></div>
<div class="a" style="left:10px;top:963px;width:829px;height:1px;background:#f0f0f0"></div>
<div class="a" style="left:10px;top:964px;width:846px;height:20px;background:#f0f0f0;border-top:1px solid #fff;border-bottom:1px solid #a0a0a0;border-right:1px solid #a0a0a0"></div>
<div class="a" style="left:16px;top:968px;width:10px;height:12px;background:#080808"></div>
<div class="t" style="left:31px;top:967.5px;line-height:14px;;">Nepřiřazeno</div>
<div class="a" style="left:101px;top:968px;width:10px;height:12px;background:#000080"></div>
<div class="t" style="left:116px;top:967.5px;line-height:14px;;">Primární oddíl</div>
<div class="a" style="left:8px;top:985px;width:849px;height:24px;background:#f0f0f0;border-top:1px solid #fff"></div>
<div class="a" style="left:636px;top:987px;width:1px;height:22px;background:#d0d0d0"></div>
<div class="a" style="left:769px;top:987px;width:1px;height:22px;background:#d0d0d0"></div>
<div class="a" style="left:855px;top:987px;width:1px;height:22px;background:#d0d0d0"></div>
<div class="a" style="left:1920px;top:0px;width:4px;height:1042px;background:#fff"></div>
<div class="a" style="left:960px;top:0px;width:960px;height:1040px;background:#ebebeb;border:1px solid #cdcdcd;border-bottom:none"></div>
<div class="t" style="left:1412px;top:7.5px;line-height:18px;font-size:15px;color:#333;letter-spacing:-0.337px;">Počítač</div>
<div class="a" style="left:1824px;top:13px;width:8px;height:2px;background:#1a1a1a"></div>
<div class="a" style="left:1850px;top:7px;width:10px;height:8px;border:1px solid #1a1a1a;border-top-width:2px"></div>
<div class="a" style="left:1868px;top:1px;width:45px;height:20px;background:#bebebe"></div>
<svg style="left:1886px;top:7px" width="10" height="9"><path d="M1 0.5 L9 8.5 M9 0.5 L1 8.5" stroke="#fff" stroke-width="1.5"/></svg>
<div class="a" style="left:972px;top:8px;width:12px;height:10px;background:linear-gradient(135deg,#1b2fd0,#3a6af0 60%,#9ab4f8);border:1px solid #a8a8a8"></div>
<div class="a" style="left:976px;top:18px;width:4px;height:2px;background:#999"></div>
<div class="a" style="left:974px;top:20px;width:8px;height:2px;background:#aaa"></div>
<div class="a" style="left:968px;top:12px;width:3px;height:10px;background:linear-gradient(90deg,#777,#ccc);border-top:2px solid #5c5"></div>
<div class="a" style="left:991px;top:9px;width:1px;height:12px;background:#9a9a9a"></div>
<svg style="left:1002px;top:8px" width="14" height="17" viewBox="0 0 14 17"><path d="M0.5 0.5 H9 L13 4.5 V16 H0.5Z" fill="#fff" stroke="#666"/><path d="M9 0.5 V4.5 H13" fill="#eee" stroke="#777"/></svg>
<svg style="left:1005px;top:14px" width="13" height="10"><path d="M1 5 L5 9 L12 1" stroke="#e8733a" stroke-width="2.6" fill="none"/></svg>
<div class="a" style="left:1024px;top:8px;width:13px;height:15px;background:linear-gradient(90deg,#c9d6e6,#e6eef8 50%,#b8c8dc);border:1px solid #b0bcc8"></div>
<div class="a" style="left:1046px;top:13px;width:7px;height:1px;background:#111"></div>
<svg style="left:1046px;top:15px" width="8" height="5"><path d="M0 0 L7 0 L3.5 4Z" fill="#111"/></svg>
<div class="a" style="left:1063px;top:9px;width:1px;height:12px;background:#9a9a9a"></div>
<div class="a" style="left:968px;top:30px;width:944px;height:1002px;background:#fff;border-top:1px solid #dadada"></div>
<div class="a" style="left:968px;top:31px;width:56px;height:23px;background:#1979ca"></div>
<div class="t" style="left:977px;top:36.5px;line-height:14px;color:#fff;letter-spacing:-0.339px;">Soubor</div>
<div class="a" style="left:1024px;top:30px;width:64px;height:26px;background:#f5f6f7;border-left:1px solid #dadada;border-right:1px solid #dadada"></div>
<div class="t" style="left:1038px;top:36.7px;line-height:14px;color:#333;font-size:11.27px;letter-spacing:-0.350px;">Počítač</div>
<div class="t" style="left:1102px;top:36.7px;line-height:14px;color:#333;letter-spacing:-0.429px;">Zobrazení</div>
<svg style="left:1874px;top:38px" width="10" height="7"><path d="M1 6 L5 2 L9 6" stroke="#707070" stroke-width="1.8" fill="none"/></svg>
<div class="a" style="left:1894px;top:35px;width:14px;height:14px;border-radius:50%;background:#1979ca"></div>
<div class="t" style="left:1897.5px;top:35px;font-size:12px;line-height:14px;color:#fff;font-weight:bold">?</div>
<div class="a" style="left:968px;top:54px;width:944px;height:93px;background:#f5f6f7;border-bottom:1px solid #dadada;border-top:1px solid #dadada"></div>
<div class="a" style="left:1025px;top:54px;width:62px;height:1px;background:#f5f6f7"></div>
<div class="a" style="left:1146px;top:58px;width:1px;height:84px;background:#e2e3e4"></div>
<div class="a" style="left:1392px;top:58px;width:1px;height:84px;background:#e2e3e4"></div>
<div class="a" style="left:1696px;top:58px;width:1px;height:84px;background:#e2e3e4"></div>
<svg style="left:991px;top:64px" width="23" height="28" viewBox="0 0 23 28"><defs><linearGradient id="docg" x1="0" y1="0" x2="1" y2="1"><stop offset="0" stop-color="#fff"/><stop offset="1" stop-color="#e8e8e8"/></linearGradient></defs>
<path d="M0.5 0.5 H15 L21.5 7 V26.5 H0.5Z" fill="url(#docg)" stroke="#8a8a8a"/><path d="M15 0.5 V7 H21.5" fill="#f4f4f4" stroke="#9a9a9a"/></svg>
<svg style="left:999px;top:76px" width="20" height="16"><path d="M2 8 L7 13 L18 2" stroke="#ea7438" stroke-width="4" fill="none" stroke-linecap="round"/></svg>
<div class="t" style="left:976px;top:97.5px;line-height:14px;color:#333;letter-spacing:-0.225px;">Vlastnosti</div>
<svg style="left:1039px;top:64px" width="23" height="28" viewBox="0 0 23 28"><defs><linearGradient id="docg2" x1="0" y1="0" x2="1" y2="1"><stop offset="0" stop-color="#f4f8fd"/><stop offset="1" stop-color="#d8e2ee"/></linearGradient></defs>
<path d="M0.5 0.5 H15 L21.5 7 V26.5 H0.5Z" fill="url(#docg2)" stroke="#b7c4d4"/><path d="M15 0.5 V7 H21.5" fill="#eef2f8" stroke="#b7c4d4"/></svg>
<svg style="left:1047px;top:74px" width="19" height="18"><path d="M9.5 1 L18 9 L13 9 L13 17 L6 17 L6 9 L1 9Z" fill="#9fb0c6" stroke="#8898b0"/></svg>
<div class="t" style="left:1033.5px;top:97.5px;line-height:14px;color:#8d8d8d;letter-spacing:-0.334px;">Otevřít</div>
<div class="a" style="left:1091px;top:71px;width:28px;height:14px;background:#e8eef6;border:2px solid #b8c4d4"></div>
<div class="a" style="left:1094px;top:74px;width:15px;height:8px;background:#9aaac0"></div>
<div class="a" style="left:1104px;top:65px;width:3px;height:26px;background:#b0bccc"></div>
<div class="a" style="left:1100px;top:65px;width:11px;height:2px;background:#b0bccc"></div>
<div class="a" style="left:1100px;top:89px;width:11px;height:2px;background:#b0bccc"></div>
<div class="t" style="left:1074.6px;top:97.5px;line-height:14px;color:#8d8d8d;font-size:11.72px;letter-spacing:-0.350px;">Přejmenovat</div>
<div class="t" style="left:1034.4px;top:130.5px;line-height:14px;color:#8d8d8d;font-size:11.71px;letter-spacing:-0.350px;">Umístění</div>
<svg style="left:1176px;top:60px" width="32" height="36" viewBox="1176 60 32 36">
<defs><linearGradient id="mside" x1="0" y1="0" x2="1" y2="1"><stop offset="0" stop-color="#f0f0f0"/><stop offset="1" stop-color="#a8a8a8"/></linearGradient>
<linearGradient id="mfront" x1="0" y1="0" x2="1" y2="0"><stop offset="0" stop-color="#777"/><stop offset=".5" stop-color="#e8e8e8"/><stop offset="1" stop-color="#999"/></linearGradient></defs>
<path d="M1182 67 L1197 62 L1199 88 L1183 94Z" fill="url(#mside)" stroke="#9a9a9a" stroke-width=".6"/>
<rect x="1178" y="66" width="5" height="28" rx="2" fill="url(#mfront)" stroke="#777" stroke-width=".6"/>
<rect x="1179" y="71" width="3" height="1.5" fill="#9c6"/>
<rect x="1190" y="64" width="10" height="11" fill="#3a5a80" stroke="#222" stroke-width=".8"/>
<rect x="1192.5" y="65.5" width="5" height="4" fill="#8ab8e0"/><rect x="1192.5" y="70.5" width="5" height="3.5" fill="#6aa0d0"/>
<ellipse cx="1199" cy="75" rx="3.5" ry="2.8" fill="#2a8ae8"/><path d="M1202 75 V63 C 1204 65, 1206 67, 1205 71" stroke="#2a8ae8" stroke-width="1.6" fill="none"/>
</svg>
<div class="t" style="left:1166px;top:97.5px;line-height:14px;color:#333;letter-spacing:-0.294px;">Přístup k</div>
<div class="t" style="left:1153.8px;top:110.5px;line-height:14px;color:#333;letter-spacing:-0.298px;">multimédiím</div>
<svg style="left:1219px;top:116px" width="7" height="4"><path d="M0 0 L6 0 L3 3.5Z" fill="#222"/></svg>
<svg style="left:1256px;top:70px" width="29" height="16" viewBox="0 0 47 25">
<path d="M0.5 11.7 L24.2 1.6 L44.9 6.7 L25.2 14.2Z" fill="#e4e4e4" stroke="#8a8a8a" stroke-width="1"/>
<path d="M0.5 11.7 L25.2 14.2 L26.3 23.3 L1 17.3Z" fill="#c8c8c8" stroke="#777" stroke-width="1"/>
<path d="M25.2 14.2 L44.9 6.7 L45.4 10.7 L26.3 23.3Z" fill="#a8a8a8" stroke="#777" stroke-width="1"/>
<rect x="21" y="16" width="3" height="6" fill="#3cc43c"/></svg>
<svg style="left:1252px;top:83px" width="34" height="12"><path d="M2 3 L30 9" stroke="#d4d4d4" stroke-width="4" stroke-linecap="round"/><path d="M8 4.3 L21 7" stroke="#22b04a" stroke-width="6"/></svg>
<div class="t" style="left:1229px;top:97.5px;line-height:14px;color:#333;letter-spacing:-0.085px;">Připojit síťovou</div>
<div class="t" style="left:1240.9px;top:110.5px;line-height:14px;color:#333;letter-spacing:0.190px;">jednotku</div>
<svg style="left:1291px;top:116px" width="7" height="4"><path d="M0 0 L6 0 L3 3.5Z" fill="#222"/></svg>
<div class="a" style="left:1342px;top:65px;width:20px;height:16px;background:linear-gradient(135deg,#cfe0ff,#8fb0f0);border:1px solid #a0a0a0"></div>
<div class="a" style="left:1336px;top:68px;width:20px;height:17px;background:linear-gradient(120deg,#0a1ea8,#2a50e0 55%,#b8c8f8);border:2px solid #c8c8c8"></div>
<svg style="left:1332px;top:85px" width="34" height="10"><path d="M2 3 L30 7" stroke="#d0d0d0" stroke-width="3"/><path d="M8 4 L22 6" stroke="#2bb54a" stroke-width="5"/></svg>
<div class="t" style="left:1333px;top:97.5px;line-height:14px;color:#333;letter-spacing:-0.270px;">Přidat</div>
<div class="t" style="left:1313.6px;top:110.5px;line-height:14px;color:#333;letter-spacing:-0.323px;">umístění v síti</div>
<div class="t" style="left:1261.6px;top:130.5px;line-height:14px;color:#8d8d8d;font-size:10.50px;letter-spacing:-0.429px;">Síť</div>
<div class="a" style="left:1424px;top:66px;width:32px;height:23px;border-radius:2px;background:linear-gradient(#5fb3ec,#2e86cf);border:1px solid #2a70b0"></div>
<div class="a" style="left:1428px;top:70px;width:9px;height:9px;border-radius:50%;border:2px solid #dff0ff;border-top-color:#f7a33a"></div>
<div class="a" style="left:1440px;top:71px;width:12px;height:4px;background:#dff0ff"></div>
<div class="a" style="left:1440px;top:78px;width:12px;height:4px;background:#dff0ff"></div>
<div class="a" style="left:1432px;top:85px;width:16px;height:9px;border-radius:50%;background:radial-gradient(#fff,#bdbdbd)"></div>
<div class="t" style="left:1399.5px;top:97.5px;line-height:14px;color:#333;letter-spacing:-0.346px;">Otevřít Ovládací</div>
<div class="t" style="left:1423.6px;top:110.5px;line-height:14px;color:#333;letter-spacing:-0.412px;">panely</div>
<div class="a" style="left:1487px;top:62px;width:16px;height:16px;background:linear-gradient(135deg,#9aa,#ddd 50%,#888);border:1px solid #555"></div>
<div class="a" style="left:1491px;top:66px;width:8px;height:8px;border-radius:50%;background:#ccc;border:1px solid #666"></div>
<div class="t" style="left:1506.8px;top:63.5px;line-height:14px;color:#333;letter-spacing:-0.149px;">Odinstalovat nebo změnit program</div>
<div class="a" style="left:1491px;top:85px;width:12px;height:10px;background:linear-gradient(135deg,#1b2fd0,#3a6af0 60%,#9ab4f8);border:1px solid #a8a8a8"></div>
<div class="a" style="left:1495px;top:95px;width:4px;height:2px;background:#999"></div>
<div class="a" style="left:1493px;top:97px;width:8px;height:2px;background:#aaa"></div>
<div class="a" style="left:1487px;top:89px;width:3px;height:10px;background:linear-gradient(90deg,#777,#ccc);border-top:2px solid #5c5"></div>
<div class="t" style="left:1506.8px;top:85.5px;line-height:14px;color:#333;letter-spacing:-0.379px;">Vlastnosti systému</div>
<div class="a" style="left:1491px;top:106px;width:12px;height:10px;background:linear-gradient(135deg,#1b2fd0,#3a6af0 60%,#9ab4f8);border:1px solid #a8a8a8"></div>
<div class="a" style="left:1495px;top:116px;width:4px;height:2px;background:#999"></div>
<div class="a" style="left:1493px;top:118px;width:8px;height:2px;background:#aaa"></div>
<div class="a" style="left:1487px;top:110px;width:3px;height:10px;background:linear-gradient(90deg,#777,#ccc);border-top:2px solid #5c5"></div>
<div class="t" style="left:1506.8px;top:107.5px;line-height:14px;color:#333;font-size:11.50px;letter-spacing:-0.350px;">Spravovat</div>
<div class="t" style="left:1526.7px;top:130.5px;line-height:14px;color:#8d8d8d;font-size:10.66px;letter-spacing:-0.350px;">Systém</div>
<div class="a" style="left:978.0px;top:155.5px;width:19px;height:19px;border-radius:50%;border:1px solid #cfcfcf"></div>
<div class="a" style="left:1006.5px;top:155.5px;width:19px;height:19px;border-radius:50%;border:1px solid #cfcfcf"></div>
<svg style="left:981px;top:160px" width="13" height="10"><path d="M6 1 L1.5 5 L6 9 M1.5 5 L12 5" stroke="#c4c4c4" stroke-width="2" fill="none"/></svg>
<svg style="left:1010px;top:160px" width="13" height="10"><path d="M7 1 L11.5 5 L7 9 M11.5 5 L1 5" stroke="#c4c4c4" stroke-width="2" fill="none"/></svg>
<svg style="left:1037px;top:163px" width="8" height="5"><path d="M0 0 L7 0 L3.5 4Z" fill="#c8c8c8"/></svg>
<svg style="left:1058px;top:158px" width="10" height="14"><path d="M5 13 L5 2 M1 6 L5 1.5 L9 6" stroke="#555" stroke-width="1.8" fill="none"/></svg>
<div class="a" style="left:1076px;top:154px;width:610px;height:22px;background:#fff;border:1px solid #d9d9d9"></div>
<div class="a" style="left:1083px;top:157px;width:12px;height:10px;background:linear-gradient(135deg,#1b2fd0,#3a6af0 60%,#9ab4f8);border:1px solid #a8a8a8"></div>
<div class="a" style="left:1087px;top:167px;width:4px;height:2px;background:#999"></div>
<div class="a" style="left:1085px;top:169px;width:8px;height:2px;background:#aaa"></div>
<div class="a" style="left:1079px;top:161px;width:3px;height:10px;background:linear-gradient(90deg,#777,#ccc);border-top:2px solid #5c5"></div>
<svg style="left:1102px;top:160px" width="5" height="9"><path d="M0 0 L4.5 4.5 L0 9Z" fill="#444"/></svg>
<div class="t" style="left:1116.5px;top:158.5px;line-height:14px;color:#111;letter-spacing:-0.337px;">Počítač</div>
<svg style="left:1164px;top:160px" width="5" height="9"><path d="M0 0 L4.5 4.5 L0 9Z" fill="#444"/></svg>
<svg style="left:1647px;top:162px" width="10" height="7"><path d="M1 1 L5 5 L9 1" stroke="#555" stroke-width="1.8" fill="none"/></svg>
<div class="a" style="left:1660px;top:155px;width:1px;height:20px;background:#e0e0e0"></div>
<svg style="left:1666px;top:158px" width="14" height="14"><path d="M11 7 A4.5 4.5 0 1 1 8.5 2.8" stroke="#555" stroke-width="1.8" fill="none"/><path d="M7 0 L11 3 L7 5.5Z" fill="#555"/></svg>
<div class="a" style="left:1698px;top:154px;width:202px;height:22px;background:#fff;border:1px solid #d9d9d9"></div>
<div class="t" style="left:1707.5px;top:158.5px;line-height:14px;color:#6d6d6d;letter-spacing:-0.156px;">Prohledat: Počítač</div>
<svg style="left:1879px;top:158px" width="13" height="13"><circle cx="8" cy="5" r="3.6" stroke="#555" stroke-width="1.6" fill="none"/><path d="M5.5 7.5 L1 12" stroke="#555" stroke-width="2"/></svg>
<div class="a" style="left:1263px;top:185px;width:1px;height:822px;background:#f0f0f0"></div>
<div class="a" style="left:1636px;top:185px;width:1px;height:822px;background:#f0f0f0"></div>
<svg style="left:988px;top:195px" width="16" height="15"><path d="M8 0.5 L10.2 5.3 L15.5 5.7 L11.4 9.1 L12.7 14.3 L8 11.5 L3.3 14.3 L4.6 9.1 L0.5 5.7 L5.8 5.3Z" fill="#fbc940" stroke="#e08a1a"/></svg>
<div class="t" style="left:1009.5px;top:197.1px;line-height:14px;color:#1e1e1e;letter-spacing:-0.088px;">Oblíbené položky</div>
<svg style="left:998px;top:216px" width="17" height="17" viewBox="0 0 17 17">
<rect x="4.5" y="3.5" width="10" height="10" fill="#eef4fa" stroke="#8a9aa8"/>
<rect x="7" y="6" width="5" height="2" fill="#5a8ad0"/><rect x="6" y="10" width="4" height="2" fill="#7aa0c8"/>
<path d="M2 13.5 H16 V16 H2Z" fill="#b8c0c8" stroke="#8a949c" stroke-width=".6"/>
<circle cx="4.5" cy="4.5" r="3.5" fill="#fff" stroke="#8a8a8a"/><path d="M4.5 2.5 V4.5 H6" stroke="#555" stroke-width=".8" fill="none"/>
</svg>
<div class="t" style="left:1019.5px;top:217.6px;line-height:14px;color:#1e1e1e;letter-spacing:-0.193px;">Naposledy navštívené</div>
<svg style="left:999px;top:238px" width="14" height="17" viewBox="0 0 14 17">
<path d="M0.5 1.5 H6 L12.5 3 V16 H0.5Z" fill="#e4c878" stroke="#c8a848" stroke-width=".8"/>
<path d="M0.5 1.5 L6.5 3.5 V16.5 L0.5 15Z" fill="#f6e6b0" stroke="#d0b060" stroke-width=".8"/>
<path d="M11 10 V13" stroke="#6a9a4a" stroke-width="1"/>
</svg>
<svg style="left:1005px;top:244px" width="10" height="11"><path d="M3 0 L7 0 L7 5 L10 5 L5 10 L0 5 L3 5Z" fill="#2a7ad0"/></svg>
<div class="t" style="left:1019.5px;top:238.6px;line-height:14px;color:#1e1e1e;letter-spacing:-0.061px;">Stažené soubory</div>
<svg style="left:1000px;top:259px" width="15" height="15"><path d="M4 1 L0.5 3.5 L4 6 L7.5 3.5Z M11 1 L7.5 3.5 L11 6 L14.5 3.5Z M4 6 L0.5 8.5 L4 11 L7.5 8.5Z M11 6 L7.5 8.5 L11 11 L14.5 8.5Z M7.5 9.5 L4 12 L7.5 14.5 L11 12Z" fill="#1f7fe0"/></svg>
<div class="t" style="left:1019.5px;top:259.6px;line-height:14px;color:#1e1e1e;letter-spacing:-0.226px;">Dropbox</div>
<div class="a" style="left:1000px;top:283px;width:15px;height:11px;border-radius:50%;border:3px solid #a8bfcc;border-bottom-color:#7d98a8"></div>
<div class="a" style="left:1004px;top:287px;width:8px;height:4px;border-radius:50%;background:#8aa4b4"></div>
<div class="t" style="left:1019.5px;top:280.6px;line-height:14px;color:#1e1e1e;letter-spacing:-0.299px;">Autodesk 360</div>
<svg style="left:999px;top:301px" width="14" height="17" viewBox="0 0 14 17">
<path d="M0.5 1.5 H6 L12.5 3 V16 H0.5Z" fill="#e4c878" stroke="#c8a848" stroke-width=".8"/>
<path d="M0.5 1.5 L6.5 3.5 V16.5 L0.5 15Z" fill="#f6e6b0" stroke="#d0b060" stroke-width=".8"/>
<path d="M11 10 V13" stroke="#6a9a4a" stroke-width="1"/>
</svg>
<div class="t" style="left:1019.5px;top:301.6px;line-height:14px;color:#1e1e1e;letter-spacing:-0.247px;">0 - Předání</div>
<svg style="left:999px;top:322px" width="14" height="17" viewBox="0 0 14 17">
<path d="M0.5 1.5 H6 L12.5 3 V16 H0.5Z" fill="#e4c878" stroke="#c8a848" stroke-width=".8"/>
<path d="M0.5 1.5 L6.5 3.5 V16.5 L0.5 15Z" fill="#f6e6b0" stroke="#d0b060" stroke-width=".8"/>
<path d="M11 10 V13" stroke="#6a9a4a" stroke-width="1"/>
</svg>
<div class="t" style="left:1019.5px;top:322.6px;line-height:14px;color:#1e1e1e;letter-spacing:-0.267px;">RD Čimice</div>
<div class="a" style="left:988px;top:366px;width:16px;height:13px;background:linear-gradient(#f8e4a0,#e8c060);border:1px solid #c8a040;border-radius:1px"></div>
<div class="a" style="left:991px;top:372px;width:10px;height:7px;background:#5aa8e0;border-radius:3px 3px 0 0"></div>
<div class="t" style="left:1009.5px;top:364.6px;line-height:14px;color:#1e1e1e;letter-spacing:-0.038px;">Knihovny</div>
<div class="a" style="left:1001px;top:384px;width:13px;height:16px;background:#fff;border:1px solid #8a8a8a"></div>
<div class="a" style="left:1003px;top:388px;width:9px;height:1px;background:#8aa"></div>
<div class="a" style="left:1003px;top:391px;width:9px;height:1px;background:#8aa"></div>
<div class="a" style="left:1003px;top:394px;width:9px;height:1px;background:#8aa"></div>
<div class="t" style="left:1019.5px;top:385.2px;line-height:14px;color:#1e1e1e;letter-spacing:0.089px;">Dokumenty</div>
<svg style="left:1000px;top:405px" width="14" height="16"><ellipse cx="5" cy="12" rx="4.5" ry="3.5" fill="#2a8ae0"/><path d="M8.5 12 L8.5 1 C 10 3, 13 5, 12 9" stroke="#2a8ae0" stroke-width="2" fill="none"/></svg>
<div class="t" style="left:1019.5px;top:406.0px;line-height:14px;color:#1e1e1e;letter-spacing:-0.090px;">Hudba</div>
<div class="a" style="left:999px;top:428px;width:16px;height:13px;background:linear-gradient(#9ad0f0 0,#cde8f6 45%,#3a9a7a 55%,#2a7a5a);border:1px solid #8a9aa8"></div>
<div class="t" style="left:1019.5px;top:427.5px;line-height:14px;color:#1e1e1e;letter-spacing:-0.413px;">Obrázky</div>
<div class="a" style="left:1000px;top:448px;width:14px;height:15px;background:linear-gradient(90deg,#333 0 3px,#4a8ad0 3px 11px,#333 11px);border:1px solid #222"></div>
<div class="t" style="left:1019.5px;top:448.2px;line-height:14px;color:#1e1e1e;font-size:11.73px;letter-spacing:-0.350px;">Videa</div>
<svg style="left:988px;top:489px" width="17" height="17"><circle cx="4" cy="9" r="3.5" fill="#2a60c0"/><circle cx="12" cy="4" r="3.5" fill="#3a70d0"/><circle cx="12" cy="13" r="3.5" fill="#3a60c8"/><circle cx="8.5" cy="8.5" r="4" fill="#2fae3f"/></svg>
<div class="t" style="left:1009.5px;top:490.6px;line-height:14px;color:#1e1e1e;letter-spacing:-0.149px;">Domácí skupina</div>
<div class="a" style="left:969px;top:529px;width:293px;height:21px;background:#f2f2f2;border:1px solid #dadada"></div>
<div class="a" style="left:992px;top:532px;width:12px;height:10px;background:linear-gradient(135deg,#1b2fd0,#3a6af0 60%,#9ab4f8);border:1px solid #a8a8a8"></div>
<div class="a" style="left:996px;top:542px;width:4px;height:2px;background:#999"></div>
<div class="a" style="left:994px;top:544px;width:8px;height:2px;background:#aaa"></div>
<div class="a" style="left:988px;top:536px;width:3px;height:10px;background:linear-gradient(90deg,#777,#ccc);border-top:2px solid #5c5"></div>
<div class="t" style="left:1009.6px;top:532.1px;line-height:14px;color:#1e1e1e;letter-spacing:-0.303px;">Počítač</div>
<div class="a" style="left:1000px;top:553px;width:4px;height:4px;background:#1ab0e8"></div><div class="a" style="left:1005px;top:553px;width:4px;height:4px;background:#1ab0e8"></div><div class="a" style="left:1000px;top:558px;width:4px;height:4px;background:#1ab0e8"></div><div class="a" style="left:1005px;top:558px;width:4px;height:4px;background:#1ab0e8"></div>
<div class="a" style="left:1000px;top:562px;width:16px;height:7px;border-radius:3px;background:linear-gradient(#e0e0e0,#5a7a8a);border:1px solid #555"></div>
<div class="t" style="left:1019.6px;top:553.6px;line-height:14px;color:#1e1e1e;letter-spacing:-0.191px;">Místní disk (C:)</div>
<div class="a" style="left:1000px;top:574px;width:15px;height:15px;border-radius:50%;background:radial-gradient(#fff 0 15%,#aaa 20%,#e8e8e8 45%,#b0b0b0 90%);border:1px solid #999"></div>
<div class="t" style="left:1019.6px;top:574.6px;line-height:14px;color:#1e1e1e;letter-spacing:-0.352px;">Jednotka BD-ROM (F:)</div>
<div class="a" style="left:1000px;top:598px;width:16px;height:9px;border-radius:5px 5px 2px 2px;background:linear-gradient(#f0f0f0,#b8b8b8);border:1px solid #6a6a6a"></div>
<div class="a" style="left:1011px;top:602px;width:3px;height:3px;background:#3db83d"></div>
<div class="t" style="left:1019.6px;top:595.6px;line-height:14px;color:#1e1e1e;letter-spacing:-0.373px;">DATA (S:)</div>
<div class="a" style="left:1000px;top:619px;width:15px;height:11px;border-radius:50%;border:3px solid #a8bfcc;border-bottom-color:#7d98a8"></div>
<div class="a" style="left:1004px;top:623px;width:8px;height:4px;border-radius:50%;background:#8aa4b4"></div>
<div class="t" style="left:1019.6px;top:616.6px;line-height:14px;color:#1e1e1e;letter-spacing:-0.272px;">Autodesk 360</div>
<svg style="left:988px;top:657px" width="17" height="17"><circle cx="6" cy="6" r="5.5" fill="#3aa860"/><path d="M3 2 Q6 6 4 10" stroke="#2a70d0" stroke-width="2" fill="none"/><rect x="6" y="6" width="10" height="8" fill="#1a3ad0" stroke="#999"/><rect x="10" y="14" width="2" height="3" fill="#888"/></svg>
<div class="t" style="left:1009.6px;top:658.6px;line-height:14px;color:#1e1e1e;font-size:11.14px;letter-spacing:-0.350px;">Síť</div>
<svg style="left:1273px;top:198.5px" width="7" height="7"><path d="M6 0 L6 6 L0 6Z" fill="#3c3c3c"/></svg>
<div class="t" style="left:1286.2px;top:193.1px;line-height:18px;font-size:15px;color:#1e3287;letter-spacing:-0.286px;">Jednotky pevných disků (2)</div>
<div class="a" style="left:1469px;top:203.5px;width:161px;height:1px;background:#e2e2e2"></div>
<svg style="left:1273px;top:338px" width="7" height="7"><path d="M6 0 L6 6 L0 6Z" fill="#3c3c3c"/></svg>
<div class="t" style="left:1286.2px;top:332.6px;line-height:18px;font-size:15px;color:#1e3287;letter-spacing:-0.113px;">Zařízení s vyměnitelným úložištěm (3)</div>
<div class="a" style="left:1543px;top:343px;width:87px;height:1px;background:#e2e2e2"></div>
<svg style="left:1273px;top:533px" width="7" height="7"><path d="M6 0 L6 6 L0 6Z" fill="#3c3c3c"/></svg>
<div class="t" style="left:1286.2px;top:527.6px;line-height:18px;font-size:15px;color:#1e3287;font-size:14.47px;letter-spacing:-0.350px;">Jiná (2)</div>
<div class="a" style="left:1340px;top:538px;width:290px;height:1px;background:#e2e2e2"></div>
<svg style="left:1284px;top:225px" width="20" height="18"><path d="M0.6 3 L8.2 1.9 L8.2 8.3 L0.6 8.3Z M9.2 1.7 L19 0.5 L19 8.3 L9.2 8.3Z M0.6 9.3 L8.2 9.3 L8.2 15.6 L0.6 14.6Z M9.2 9.3 L19 9.3 L19 17.2 L9.2 15.8Z" fill="#12c0f2"/></svg>
<svg style="left:1283px;top:238px" width="47" height="25" viewBox="0 0 47 25">
<defs><linearGradient id="gtop" x1="0" y1="0" x2="0" y2="1"><stop offset="0" stop-color="#f4f4f4"/><stop offset="1" stop-color="#c4c4c4"/></linearGradient>
<linearGradient id="gfront" x1="0" y1="0" x2="0" y2="1"><stop offset="0" stop-color="#e0e0e0"/><stop offset=".5" stop-color="#f8f8f8"/><stop offset="1" stop-color="#8a8a8a"/></linearGradient>
<linearGradient id="gteal" x1="0" y1="0" x2="0" y2="1"><stop offset="0" stop-color="#6a9aae"/><stop offset=".5" stop-color="#1e5a70"/><stop offset="1" stop-color="#3a6a7a"/></linearGradient>
<linearGradient id="gside" x1="0" y1="0" x2="1" y2="0"><stop offset="0" stop-color="#d8d8d8"/><stop offset="1" stop-color="#9a9a9a"/></linearGradient></defs>
<path d="M0.5 11.7 L24.2 1.6 L44.9 6.7 L25.2 14.2Z" fill="url(#gtop)" stroke="#9a9a9a" stroke-width=".7"/>
<path d="M0.5 11.7 L25.2 14.2 L26.3 23.3 L1 17.3Z" fill="url(#gteal)" stroke="#777" stroke-width=".7"/>
<path d="M25.2 14.2 L44.9 6.7 L45.4 10.7 L26.3 23.3Z" fill="url(#gside)" stroke="#777" stroke-width=".7"/>
<ellipse cx="24" cy="2.6" rx="3" ry="1.4" fill="#ddd" stroke="#999" stroke-width=".5"/>
<rect x="23.3" y="15.5" width="2.2" height="6" fill="#3cc43c" stroke="#222" stroke-width=".5"/>
</svg>
<div class="t" style="left:1336.6px;top:220.8px;line-height:14px;color:#111;letter-spacing:-0.185px;">Místní disk (C:)</div>
<div class="a" style="left:1336px;top:237px;width:188px;height:13px;background:#e6e6e6;border:1px solid #bcbcbc"></div>
<div class="a" style="left:1337px;top:238px;width:169px;height:11px;background:#da2626"></div>
<div class="t" style="left:1336.6px;top:251.4px;line-height:14px;color:#6d6d6d;font-size:11.71px;letter-spacing:-0.350px;">29,7 GB volných z 334 GB</div>
<svg style="left:1283px;top:294px" width="47" height="25" viewBox="0 0 47 25">
<defs><linearGradient id="gtop" x1="0" y1="0" x2="0" y2="1"><stop offset="0" stop-color="#f4f4f4"/><stop offset="1" stop-color="#c4c4c4"/></linearGradient>
<linearGradient id="gfront" x1="0" y1="0" x2="0" y2="1"><stop offset="0" stop-color="#e0e0e0"/><stop offset=".5" stop-color="#f8f8f8"/><stop offset="1" stop-color="#8a8a8a"/></linearGradient>
<linearGradient id="gteal" x1="0" y1="0" x2="0" y2="1"><stop offset="0" stop-color="#6a9aae"/><stop offset=".5" stop-color="#1e5a70"/><stop offset="1" stop-color="#3a6a7a"/></linearGradient>
<linearGradient id="gside" x1="0" y1="0" x2="1" y2="0"><stop offset="0" stop-color="#d8d8d8"/><stop offset="1" stop-color="#9a9a9a"/></linearGradient></defs>
<path d="M0.5 11.7 L24.2 1.6 L44.9 6.7 L25.2 14.2Z" fill="url(#gtop)" stroke="#9a9a9a" stroke-width=".7"/>
<path d="M0.5 11.7 L25.2 14.2 L26.3 23.3 L1 17.3Z" fill="url(#gfront)" stroke="#777" stroke-width=".7"/>
<path d="M25.2 14.2 L44.9 6.7 L45.4 10.7 L26.3 23.3Z" fill="url(#gside)" stroke="#777" stroke-width=".7"/>
<ellipse cx="24" cy="2.6" rx="3" ry="1.4" fill="#ddd" stroke="#999" stroke-width=".5"/>
<rect x="23.3" y="15.5" width="2.2" height="6" fill="#3cc43c" stroke="#222" stroke-width=".5"/>
</svg>
<div class="t" style="left:1336.6px;top:276.8px;line-height:14px;color:#111;letter-spacing:-0.373px;">DATA (S:)</div>
<div class="a" style="left:1336px;top:293px;width:188px;height:13px;background:#e6e6e6;border:1px solid #bcbcbc"></div>
<div class="a" style="left:1337px;top:294px;width:154px;height:11px;background:#26a0da"></div>
<div class="t" style="left:1336.6px;top:307.4px;line-height:14px;color:#6d6d6d;font-size:11.71px;letter-spacing:-0.350px;">56,5 GB volných z 326 GB</div>
<svg style="left:1283px;top:382px" width="47" height="25" viewBox="0 0 47 25">
<defs><linearGradient id="gtop" x1="0" y1="0" x2="0" y2="1"><stop offset="0" stop-color="#f4f4f4"/><stop offset="1" stop-color="#c4c4c4"/></linearGradient>
<linearGradient id="gfront" x1="0" y1="0" x2="0" y2="1"><stop offset="0" stop-color="#e0e0e0"/><stop offset=".5" stop-color="#f8f8f8"/><stop offset="1" stop-color="#8a8a8a"/></linearGradient>
<linearGradient id="gteal" x1="0" y1="0" x2="0" y2="1"><stop offset="0" stop-color="#6a9aae"/><stop offset=".5" stop-color="#1e5a70"/><stop offset="1" stop-color="#3a6a7a"/></linearGradient>
<linearGradient id="gside" x1="0" y1="0" x2="1" y2="0"><stop offset="0" stop-color="#d8d8d8"/><stop offset="1" stop-color="#9a9a9a"/></linearGradient></defs>
<path d="M0.5 11.7 L24.2 1.6 L44.9 6.7 L25.2 14.2Z" fill="url(#gtop)" stroke="#9a9a9a" stroke-width=".7"/>
<path d="M0.5 11.7 L25.2 14.2 L26.3 23.3 L1 17.3Z" fill="url(#gfront)" stroke="#777" stroke-width=".7"/>
<path d="M25.2 14.2 L44.9 6.7 L45.4 10.7 L26.3 23.3Z" fill="url(#gside)" stroke="#777" stroke-width=".7"/>
<ellipse cx="24" cy="2.6" rx="3" ry="1.4" fill="#ddd" stroke="#999" stroke-width=".5"/>
<rect x="23.3" y="15.5" width="2.2" height="6" fill="#3cc43c" stroke="#222" stroke-width=".5"/>
</svg>
<svg style="left:1300px;top:359px" width="28" height="28" viewBox="-14 -14 28 28">
<defs><radialGradient id="gd13"><stop offset="0" stop-color="#fff"/><stop offset=".2" stop-color="#e6e6e6"/><stop offset=".6" stop-color="#d0d0d0"/><stop offset="1" stop-color="#a8a8a8"/></radialGradient></defs>
<circle r="13" fill="url(#gd13)" stroke="#8a8a8a" stroke-width=".8"/>
<path d="M-12.35 -3.9 L0 0 L-10.4 -7.8Z" fill="#9be040" opacity=".8"/>
<path d="M12.35 1.3 L0 0 L11.700000000000001 -5.2Z" fill="#e8b8d8" opacity=".7"/>
<circle r="3.6400000000000006" fill="#f4f4f4" stroke="#aaa" stroke-width=".8"/><circle r="1.3" fill="#fff" stroke="#bbb" stroke-width=".5"/>
</svg>
<div class="a" style="left:1301px;top:378px;width:27px;height:12px;background:linear-gradient(#5a5a5a,#0a0a0a);border:1px solid #888;border-radius:2px;color:#fff;font-size:11px;line-height:10px;text-align:center;white-space:nowrap;overflow:hidden;letter-spacing:-0.4px">DVD</div>
<div class="t" style="left:1336px;top:375.2px;line-height:14px;color:#111;font-size:11.81px;letter-spacing:-0.350px;">Jednotka DVD RW (D:)</div>
<svg style="left:1284px;top:416px" width="46" height="46" viewBox="-23 -23 46 46">
<defs><radialGradient id="gd22"><stop offset="0" stop-color="#fff"/><stop offset=".2" stop-color="#e6e6e6"/><stop offset=".6" stop-color="#d0d0d0"/><stop offset="1" stop-color="#a8a8a8"/></radialGradient></defs>
<circle r="22" fill="url(#gd22)" stroke="#8a8a8a" stroke-width=".8"/>
<path d="M-20.9 -6.6 L0 0 L-17.6 -13.2Z" fill="#9be040" opacity=".8"/>
<path d="M20.9 2.2 L0 0 L19.8 -8.8Z" fill="#e8b8d8" opacity=".7"/>
<circle r="6.16" fill="#f4f4f4" stroke="#aaa" stroke-width=".8"/><circle r="2.2" fill="#fff" stroke="#bbb" stroke-width=".5"/>
</svg>
<div class="a" style="left:1284px;top:448px;width:44px;height:14px;background:linear-gradient(#5a5a5a,#0a0a0a);border:1px solid #888;border-radius:2px;color:#fff;font-size:10.5px;line-height:12px;text-align:center;white-space:nowrap;overflow:hidden;letter-spacing:-0.4px">CD-ROM</div>
<div class="t" style="left:1336px;top:430.9px;line-height:14px;color:#111;letter-spacing:-0.342px;">Jednotka BD-ROM (F:)</div>
<svg style="left:1283px;top:492px" width="47" height="25" viewBox="0 0 47 25">
<defs><linearGradient id="gtop" x1="0" y1="0" x2="0" y2="1"><stop offset="0" stop-color="#f4f4f4"/><stop offset="1" stop-color="#c4c4c4"/></linearGradient>
<linearGradient id="gfront" x1="0" y1="0" x2="0" y2="1"><stop offset="0" stop-color="#e0e0e0"/><stop offset=".5" stop-color="#f8f8f8"/><stop offset="1" stop-color="#8a8a8a"/></linearGradient>
<linearGradient id="gteal" x1="0" y1="0" x2="0" y2="1"><stop offset="0" stop-color="#6a9aae"/><stop offset=".5" stop-color="#1e5a70"/><stop offset="1" stop-color="#3a6a7a"/></linearGradient>
<linearGradient id="gside" x1="0" y1="0" x2="1" y2="0"><stop offset="0" stop-color="#d8d8d8"/><stop offset="1" stop-color="#9a9a9a"/></linearGradient></defs>
<path d="M0.5 11.7 L24.2 1.6 L44.9 6.7 L25.2 14.2Z" fill="url(#gtop)" stroke="#9a9a9a" stroke-width=".7"/>
<path d="M0.5 11.7 L25.2 14.2 L26.3 23.3 L1 17.3Z" fill="url(#gfront)" stroke="#777" stroke-width=".7"/>
<path d="M25.2 14.2 L44.9 6.7 L45.4 10.7 L26.3 23.3Z" fill="url(#gside)" stroke="#777" stroke-width=".7"/>
<ellipse cx="24" cy="2.6" rx="3" ry="1.4" fill="#ddd" stroke="#999" stroke-width=".5"/>
<rect x="23.3" y="15.5" width="2.2" height="6" fill="#3cc43c" stroke="#222" stroke-width=".5"/>
</svg>
<svg style="left:1302px;top:469px" width="26" height="26" viewBox="-13 -13 26 26">
<defs><radialGradient id="gd12"><stop offset="0" stop-color="#fff"/><stop offset=".2" stop-color="#e6e6e6"/><stop offset=".6" stop-color="#d0d0d0"/><stop offset="1" stop-color="#a8a8a8"/></radialGradient></defs>
<circle r="12" fill="url(#gd12)" stroke="#8a8a8a" stroke-width=".8"/>
<path d="M-11.399999999999999 -3.5999999999999996 L0 0 L-9.600000000000001 -7.199999999999999Z" fill="#9be040" opacity=".8"/>
<path d="M11.399999999999999 1.2000000000000002 L0 0 L10.8 -4.800000000000001Z" fill="#e8b8d8" opacity=".7"/>
<circle r="3.3600000000000003" fill="#f4f4f4" stroke="#aaa" stroke-width=".8"/><circle r="1.2000000000000002" fill="#fff" stroke="#bbb" stroke-width=".5"/>
</svg>
<div class="a" style="left:1305px;top:486px;width:23px;height:12px;background:linear-gradient(#5a5a5a,#0a0a0a);border:1px solid #888;border-radius:2px;color:#fff;font-size:11px;line-height:10px;text-align:center;white-space:nowrap;overflow:hidden;letter-spacing:-0.4px">BD</div>
<div class="a" style="left:1284px;top:505px;width:12px;height:12px;background:linear-gradient(#e8f4f0,#b8d8c8);border:1px solid #9ab"></div>
<div class="a" style="left:1286px;top:508px;width:4px;height:7px;border-radius:2px 2px 0 0;background:#4a8a5a"></div><div class="a" style="left:1291px;top:508px;width:4px;height:7px;border-radius:2px 2px 0 0;background:#c87a3a"></div>
<div class="t" style="left:1336px;top:487.5px;line-height:14px;color:#111;letter-spacing:-0.352px;">Jednotka BD-ROM (G:)</div>
<svg style="left:1275px;top:550px" width="65" height="50">
<defs><linearGradient id="adg" x1="0" y1="0" x2="0" y2="1"><stop offset="0" stop-color="#a8cfdc"/><stop offset="1" stop-color="#6892a8"/></linearGradient></defs>
<ellipse cx="31.8" cy="25" rx="24" ry="18" transform="rotate(12 31.8 25)" fill="url(#adg)"/>
<path d="M20 14 C 30 3, 52 7, 56 24 C 50 15, 38 12, 26 15 Z" fill="#b8dae6"/>
<ellipse cx="35" cy="28" rx="14" ry="8" transform="rotate(8 35 28)" fill="#557a90"/>
<path d="M14 30 C 18 24, 30 20, 44 24 C 34 22, 22 24, 14 30Z" fill="#c8e4ee"/>
<ellipse cx="33.5" cy="28.5" rx="7" ry="2.8" fill="#fff"/>
</svg>
<div class="t" style="left:1336.6px;top:562.1px;line-height:14px;color:#111;letter-spacing:-0.281px;">Autodesk 360</div>
<div class="t" style="left:1336.6px;top:578.8px;line-height:14px;color:#6d6d6d;letter-spacing:-0.387px;">Systémová složka</div>
<svg style="left:1290px;top:611px" width="34" height="45"><ellipse cx="17" cy="22.5" rx="17" ry="22.5" fill="#0c3c78"/><path d="M9 14 L24 29 L17 36 L17 9 L24 16 L9 31" stroke="#fff" stroke-width="2.8" fill="none" stroke-linejoin="miter"/></svg>
<div class="t" style="left:1336.6px;top:618.1px;line-height:14px;color:#111;letter-spacing:-0.295px;">Nokia 6303i classic</div>
<div class="t" style="left:1336.6px;top:634.9px;line-height:14px;color:#6d6d6d;letter-spacing:-0.387px;">Systémová složka</div>
<div class="t" style="left:1661px;top:194.5px;line-height:18px;font-size:15px;color:#1e395b;letter-spacing:-0.044px;">Položky: 7</div>
<svg style="left:1655px;top:250px" width="110" height="95" viewBox="1655 250 110 95">
<defs>
<linearGradient id="scr" x1="0" y1="0.2" x2="1" y2="0"><stop offset="0" stop-color="#1838e0"/><stop offset=".45" stop-color="#0818d0"/><stop offset=".5" stop-color="#4a68f4"/><stop offset="1" stop-color="#6a86f6"/></linearGradient>
<linearGradient id="twr" x1="0" y1="0" x2="1" y2="0"><stop offset="0" stop-color="#888"/><stop offset=".5" stop-color="#eee"/><stop offset="1" stop-color="#999"/></linearGradient>
<radialGradient id="stnd"><stop offset="0" stop-color="#f4f4f4"/><stop offset="1" stop-color="#c4c4c4"/></radialGradient>
</defs>
<path d="M1669 284 L1690 276 L1700 320 L1669 323Z" fill="#d6d6d6"/>
<rect x="1664" y="282" width="6" height="41" rx="2.5" fill="url(#twr)" stroke="#777" stroke-width=".6"/>
<rect x="1665.5" y="289" width="3" height="2" fill="#3a3"/>
<ellipse cx="1714" cy="325" rx="18" ry="8" fill="url(#stnd)" stroke="#c0c0c0" stroke-width=".5"/>
<path d="M1706 312 L1722 314 L1720 322 L1708 321Z" fill="#c8c8c8"/>
<path d="M1688.3 261.9 L1748 269 L1743.4 317.5 L1683.3 306.5Z" fill="#dadada" stroke="#b8b8b8" stroke-width=".8"/>
<path d="M1691 264.5 L1744 271 L1739 314 L1686 304Z" fill="url(#scr)"/>
</svg>
<div class="t" style="left:1661px;top:348.2px;line-height:14px;color:#111;letter-spacing:0.205px;">VAIO</div>
<div class="t" style="left:1661px;top:366.2px;line-height:14px;color:#6d6d6d;letter-spacing:-0.180px;">Pracovní skupina:</div>
<div class="t" style="left:1804.2px;top:366.2px;line-height:14px;color:#1e395b;letter-spacing:-1.154px;">WORKGROUP</div>
<div class="t" style="left:1661px;top:384.4px;line-height:14px;color:#6d6d6d;letter-spacing:-0.356px;">Procesor:</div>
<div class="t" style="left:1804.2px;top:384.4px;line-height:14px;color:#1e395b;letter-spacing:-0.255px;">Intel(R) Core(...</div>
<div class="t" style="left:1661px;top:401.9px;line-height:14px;color:#6d6d6d;font-size:11.65px;letter-spacing:-0.350px;">Paměť:</div>
<div class="t" style="left:1804.2px;top:401.9px;line-height:14px;color:#1e395b;letter-spacing:-1.021px;">6,00 GB</div>
<div class="t" style="left:982.6px;top:1014.1px;line-height:14px;color:#1e395b;letter-spacing:-0.222px;">Počet položek: 7</div>
<div class="a" style="left:1078px;top:1012px;width:1px;height:16px;background:#f0f0f0"></div>
<div class="a" style="left:1867px;top:1015px;width:14px;height:12px;background:repeating-linear-gradient(#fff 0 1px,#444 1px 2px,#fff 2px 4px)"></div>
<div class="a" style="left:1890px;top:1015px;width:14px;height:12px;background:linear-gradient(#9ad0f0 0,#cde8f6 45%,#2a7ab0 55%,#1a5a90);border:1px solid #556"></div>

</body></html>
